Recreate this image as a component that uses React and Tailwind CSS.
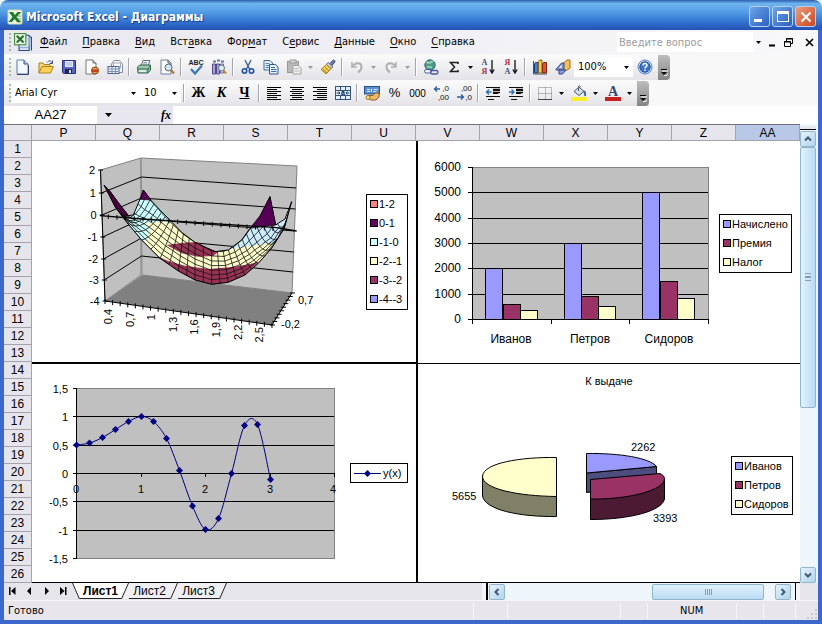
import React from "react";

const COLUMNS = ["P", "Q", "R", "S", "T", "U", "V", "W", "X", "Y", "Z", "AA"];
const ROWS = Array.from({ length: 26 }, (_, i) => i + 1);

/* ---------- small building blocks ---------- */

function Svg({ children, size = 16 }) {
  return (
    <svg viewBox="0 0 16 16" width={size} height={size} fill="none" className="shrink-0 overflow-visible" aria-hidden="true">
      {children}
    </svg>
  );
}

function Tool({ label, children }) {
  return (
    <button type="button" aria-label={label} className="flex h-6 w-[23px] shrink-0 items-center justify-center">
      {children}
    </button>
  );
}

function Caret({ muted }) {
  return (
    <svg viewBox="0 0 5 3" width="5" height="3" className="shrink-0" aria-hidden="true">
      <path d="M0 0h5L2.500 3z" fill={muted ? "#9a9a9a" : "#000"} />
    </svg>
  );
}

function Drop({ label, muted }) {
  return (
    <button type="button" aria-label={label} className="flex h-6 w-[11px] shrink-0 items-center justify-center">
      <Caret muted={muted} />
    </button>
  );
}

function Sep() {
  return <span className="mx-[2px] h-[18px] w-[2px] shrink-0 border-l border-[#a5a5ad] border-r border-r-white" />;
}

function Grip() {
  return (
    <svg viewBox="0 0 7 20" width="7" height="20" className="shrink-0" aria-hidden="true">
      {[2, 6, 10, 14, 18].map((y) => (
        <rect key={y} x="5" y={y - 1} width="2" height="2" fill="#9cc4a4" />
      ))}
    </svg>
  );
}

function Cap() {
  return (
    <button
      type="button"
      aria-label="Параметры панелей инструментов"
      className="ml-[2px] flex h-[25px] w-3 shrink-0 flex-col items-center justify-end rounded-r-sm bg-linear-to-b from-[#bdbdbd] to-[#858585] pb-1"
    >
      <svg viewBox="0 0 7 7" width="7" height="7" aria-hidden="true">
        <path d="M1 2h6M3 6l2 1 2-2" stroke="#fff" fill="none" />
        <path d="M0 .5h6" stroke="#000" />
        <path d="M0 3h6L3 6z" fill="#000" />
      </svg>
    </button>
  );
}

function Combo({ label, value, className }) {
  return (
    <span className={"flex h-5 shrink-0 items-center bg-white " + className}>
      <select
        aria-label={label}
        defaultValue={value}
        className="min-w-0 flex-1 appearance-none bg-transparent pl-1 text-[11px] leading-4 text-black outline-none"
      >
        <option>{value}</option>
      </select>
      <span className="flex w-[13px] items-center justify-center">
        <Caret />
      </span>
    </span>
  );
}

/* ---------- icons ---------- */

const Page = ({ x = 2 }) => (
  <g>
    <path d={`M${x + 1} 1h7l4 4v10h-11z`} fill="#f4f9ff" stroke="#5d7bab" />
    <path d={`M${x + 8} 1v4h4`} fill="#bcd3ef" stroke="#2f4f86" />
    <path d={`M${x + 1} 15.500h11.500V6`} stroke="#2f4270" />
  </g>
);

const IconNew = () => <Svg><Page x={1} /></Svg>;
const IconOpen = () => (
  <Svg>
    <path d="M1 14V4h4l1 1.500h6V8" fill="#f7d774" stroke="#a9801c" />
    <path d="M1 14l3-6.500h11.500L12.500 14z" fill="#ffd257" stroke="#a9801c" />
    <path d="M9 3.500c2-2.500 4-2 5 .5M14.500 1.500v3h-3" stroke="#3c4f74" />
  </Svg>
);
const IconSave = () => (
  <Svg>
    <path d="M1.500 1.500h13v13h-12l-1-1z" fill="#5a64c4" stroke="#27307e" />
    <rect x="4" y="2" width="8" height="6" fill="#e6ecfb" />
    <path d="M5 4h6M5 6h6" stroke="#9fb0da" />
    <rect x="4" y="10" width="7" height="4.500" fill="#20264f" />
    <rect x="8" y="11" width="2" height="3" fill="#dfe4f5" />
  </Svg>
);
const IconPermission = () => (
  <Svg>
    <path d="M2 1h7l3 3v11H2z" fill="#fff" stroke="#777" />
    <path d="M9 1v3h3" stroke="#666" fill="#ddd" />
    <circle cx="11" cy="11.500" r="3.500" fill="#e9a34b" stroke="#8d3a12" />
    <rect x="8" y="10.500" width="6" height="2.500" fill="#c4401c" />
  </Svg>
);
const IconMail = () => (
  <Svg>
    <path d="M4.500 7V5L7 1.500h5.500L15.500 5v8.500H12" fill="#f4f4f6" stroke="#8a8f9c" />
    <path d="M6.500 4h7v5h-7z" fill="#fff" stroke="#a4a9b6" />
    <rect x="1" y="7.500" width="11" height="7" fill="#eef2fb" stroke="#51648f" />
    <path d="M1 10h11M1 12.500h11M5 8v6M8.500 8v6" stroke="#7b8fbd" />
  </Svg>
);
const IconPrint = () => (
  <Svg>
    <path d="M5 7l2-5.500h7L12 7z" fill="#fff" stroke="#5d6d7a" />
    <path d="M7.500 3.500h4M7 5h4" stroke="#8ba0b8" />
    <path d="M1.500 8L4 6h10.500v5L12 14H2z" fill="#9ac9b0" stroke="#35614c" />
    <path d="M2 10h10v3.500" stroke="#35614c" />
    <path d="M3 12h7" stroke="#f2f8f4" strokeWidth="1.500" />
    <path d="M12 10l2.500-3" stroke="#35614c" />
  </Svg>
);
const IconPreview = () => (
  <Svg>
    <path d="M2 1h7l3 3v11H2z" fill="#fff" stroke="#6d7c96" />
    <path d="M9 1v3h3" stroke="#43536f" />
    <circle cx="9.500" cy="8.500" r="3.500" fill="#cfe6f4" stroke="#5a6674" />
    <path d="M12 11l3 3.500" stroke="#b0742a" strokeWidth="2" />
  </Svg>
);
const IconSpell = () => (
  <Svg>
    <text x="8" y="6" textAnchor="middle" fontSize="7" fontFamily="Liberation Sans" fontWeight="700" fill="#222">ABC</text>
    <path d="M3 10l4 4.500L14 6.500" stroke="#3a78b8" strokeWidth="2.200" />
  </Svg>
);
const IconResearch = () => (
  <Svg>
    <path d="M1.500 5h3v10h-3zM5.500 5h3v10h-3z" fill="#a8a3d4" stroke="#514b88" />
    <path d="M2 2.500h3M6 1.500h3M10 2.500h3" stroke="#6b76a8" strokeWidth="2" />
    <path d="M9.500 5h3v9h-3z" fill="#cfd3ea" stroke="#6f6a9c" />
    <circle cx="10.500" cy="9" r="3" fill="#d8eef6" stroke="#6a7480" />
    <path d="M12.500 11.500l2.500 3" stroke="#c18a2a" strokeWidth="2" />
  </Svg>
);
const IconCut = () => (
  <Svg>
    <path d="M5 1l4.500 9M11 1L6.500 10" stroke="#3d5e8e" strokeWidth="1.400" />
    <circle cx="4.500" cy="12" r="2.200" stroke="#1d4fa8" strokeWidth="1.600" />
    <circle cx="11.500" cy="12" r="2.200" stroke="#1d4fa8" strokeWidth="1.600" />
  </Svg>
);
const IconCopy = () => (
  <Svg>
    <path d="M1 1.500h6l2.500 2.500v7H1z" fill="#e6f0fc" stroke="#3f6a9f" />
    <path d="M2.500 4.500h4M2.500 6.500h5M2.500 8.500h5" stroke="#5c87bd" />
    <path d="M6.500 5.500h6L15 8v7H6.500z" fill="#e6f0fc" stroke="#2d588f" />
    <path d="M8 8.500h4M8 10.500h5.500M8 12.500h5.500" stroke="#3f6fae" />
  </Svg>
);
const IconPaste = () => (
  <Svg>
    <rect x="1.500" y="2.500" width="11" height="11" fill="#b9b9b9" stroke="#9a9a9a" />
    <rect x="4" y="1" width="6" height="3" fill="#d5d5d5" stroke="#999" />
    <path d="M7 6.500h5L15 9v6H7z" fill="#f1f1f1" stroke="#a3a3a3" />
    <path d="M8.500 9.500h4M8.500 12h5" stroke="#b3b3b3" />
  </Svg>
);
const IconBrush = () => (
  <Svg>
    <path d="M10 4.500L13.500 .8l1.700 1.600L12 6.500z" fill="#6d7fae" stroke="#3d4a78" />
    <path d="M8 3.500l5 4.500-2 1.500-4.500-4z" fill="#d7dcec" stroke="#59648e" />
    <path d="M6.500 5.500L11 9.500 6 15 1 10.500z" fill="#f3cf55" stroke="#a27a1b" />
    <path d="M3 10.500l4 3.500M5 8.500l4 3.500" stroke="#a27a1b" />
  </Svg>
);
const IconUndo = ({ flip }) => (
  <Svg>
    <g transform={flip ? "translate(16 0) scale(-1 1)" : undefined}>
      <path d="M3 3v5h5" stroke="#b0b0b0" strokeWidth="1.600" />
      <path d="M3.500 7.500C6 3 12.500 3 12.500 8c0 3-2 4.500-3.500 5.500" stroke="#b0b0b0" strokeWidth="2" />
    </g>
  </Svg>
);
const IconLink = () => (
  <Svg>
    <circle cx="7" cy="6" r="5.200" fill="#4f9a86" stroke="#2e6a78" />
    <path d="M3 4c2-2 3 1 4 0s2-2 3-1M4 8c2-1 3 1 5 0" stroke="#a5dcc0" strokeWidth="1.500" />
    <rect x="1.500" y="10.500" width="7" height="3.500" rx="1.700" fill="#fff" fillOpacity=".6" stroke="#4a5aa0" />
    <rect x="7.500" y="11.500" width="7.500" height="3.500" rx="1.700" stroke="#4a5aa0" strokeWidth="1.300" />
  </Svg>
);
const IconSum = () => (
  <Svg>
    <path d="M12 5V3.500H4.500L8.500 8l-4 4.500H12V11" stroke="#1c1c1c" strokeWidth="1.500" />
  </Svg>
);
const IconSort = ({ desc }) => (
  <Svg>
    <text x="4.500" y="6" textAnchor="middle" fontSize="8" fontFamily="Liberation Serif" fontWeight="700" fill={desc ? "#a83242" : "#3c4a80"}>{desc ? "Я" : "А"}</text>
    <text x="4.500" y="15" textAnchor="middle" fontSize="8" fontFamily="Liberation Serif" fontWeight="700" fill={desc ? "#3c4a80" : "#a83242"}>{desc ? "А" : "Я"}</text>
    <path d="M12 1v12M9.800 10.500L12 14l2.200-3.500" stroke="#111" strokeWidth="1.300" />
  </Svg>
);
const IconChart = () => (
  <Svg>
    <path d="M1.500 2v13H15" stroke="#44516c" />
    <path d="M2.500 5l1-1.500H6V14H2.500z" fill="#4d7fd0" stroke="#24417f" />
    <path d="M6.500 2.500l1-1.500H10v13H6.500z" fill="#f3cc4c" stroke="#8a6914" />
    <path d="M10.500 5l1-1.500H14.500V14h-4z" fill="#d8552f" stroke="#7f2711" />
  </Svg>
);
const IconDraw = () => (
  <Svg>
    <path d="M7 5.500L12 1h3v8l-3.500 2.500H8z" fill="#f4c254" stroke="#9b6e1c" />
    <path d="M1 10.500L6.500 4H9v7H1z" fill="#7f93cf" stroke="#35468a" />
    <path d="M4 8.500l2.500-2.500v3z" fill="#fff" />
    <path d="M4 11h7l-3.500 4H4z" fill="#8a9ad8" stroke="#35468a" />
  </Svg>
);
const IconHelp = () => (
  <Svg>
    <circle cx="8" cy="8" r="7" fill="#c5dcf5" stroke="#5b86c0" />
    <circle cx="8" cy="8" r="5.200" fill="#3a72c4" stroke="#24569f" />
    <path d="M6 6.500c0-3 4.200-2.500 4 0C9.900 7.800 8 7.700 8 9.500M8 10.500v1.500" stroke="#fff" strokeWidth="1.500" />
  </Svg>
);
const IconAlign = ({ kind }) => (
  <Svg>
    {[1, 3, 5, 7, 9, 11, 13].map((y, i) => {
      const w = i % 2 ? 10 : 14;
      const x = kind === "left" ? 1 : kind === "right" ? 15 - w : 8 - w / 2;
      return <rect key={y} x={x} y={y + 1} width={w} height="1" fill="#000" />;
    })}
  </Svg>
);
const IconMerge = () => (
  <Svg>
    <rect x=".5" y="1.500" width="15" height="13" fill="#e4effa" stroke="#34547e" />
    <path d="M.5 5.500h15M.5 10.500h15M5.500 2v3.500M10.500 2v3.500M5.500 10.500v4M10.500 10.500v4" stroke="#34547e" />
    <path d="M1.500 8h3M3.500 6.500L5 8 3.500 9.500M14.500 8h-3M12.500 6.500L11 8l1.500 1.500" stroke="#1d3c66" />
    <text x="8" y="10.200" textAnchor="middle" fontSize="7" fontWeight="700" fontFamily="Liberation Sans" fill="#111">a</text>
  </Svg>
);
const IconMoney = () => (
  <Svg>
    <rect x=".5" y="1.500" width="15" height="7.500" fill="#5d8fd0" stroke="#24508e" />
    <path d="M3 4.500h3M3 6.500h3M7.500 4v3M9.500 4.500h4M9.500 6.500h3" stroke="#dceaff" />
    <path d="M4 10.500h5l2-2.500h4v4l-3 3H7l-3-2z" fill="#f0b768" stroke="#935c1e" />
    <circle cx="4" cy="12.500" r="2" fill="#ffe27a" stroke="#9a7419" />
  </Svg>
);
const IconDecimal = ({ dec }) => (
  <Svg>
    <path d={dec ? "M1 12h6M5 9.500L7.500 12 5 14.500" : "M7 4H1.500M4 1.500L1.500 4 4 6.500"} stroke="#2c5f9e" strokeWidth="1.300" />
    <text x="16" y="6" textAnchor="end" fontSize="8" fontFamily="Liberation Sans" fill="#111">{dec ? ",00" : ",0"}</text>
    <text x="16" y="15" textAnchor="end" fontSize="8" fontFamily="Liberation Sans" fill="#111">{dec ? ",0" : ",00"}</text>
  </Svg>
);
const IconIndent = ({ inc }) => (
  <Svg>
    <path d="M1 2.500h14M8 5.500h7M8 8.500h5M1 11.500h14M3 14.500h6" stroke="#111" strokeWidth="1" />
    <path d="M8 4.500h7M8 7.500h7" stroke="#111" strokeWidth="1.500" />
    <path d={inc ? "M1 7h5M3.500 4.500L6 7 3.500 9.500" : "M6.500 7h-5M4 4.500L1.500 7 4 9.500"} stroke="#2c6fae" strokeWidth="1.300" />
  </Svg>
);
const IconBorders = () => (
  <Svg>
    <path d="M1.500 2.500h13v12h-13zM8.500 2.500v12M1.500 8.500h13" stroke="#7c7c84" strokeDasharray="1 1" />
    <path d="M1 14.500h14" stroke="#444" />
  </Svg>
);
const IconFill = () => (
  <Svg>
    <path d="M3 6.500L8 2l5 4.500-5 4z" fill="#d4dce8" stroke="#4b596e" />
    <path d="M7.500 6V1.500c0-1 2-1 2 0" stroke="#4b596e" />
    <path d="M12.500 6c2 1 2 3 1.500 5" stroke="#2f62a8" strokeWidth="1.800" />
    <rect x="0" y="12" width="16" height="4" fill="#f8ee2c" />
  </Svg>
);
const IconFontColor = () => (
  <Svg>
    <text x="8" y="10.500" textAnchor="middle" fontSize="14" fontFamily="Liberation Serif" fontWeight="700" fill="#34466f">A</text>
    <rect x="0" y="12" width="16" height="4" fill="#c8201c" />
  </Svg>
);
const IconExcel = () => (
  <Svg>
    <rect x="1" y="1" width="14" height="14" rx="1" fill="#f3f8e8" stroke="#c9d8a8" />
    <path d="M10 4h4M10 7h4M10 10h4M10 13h4" stroke="#79ad70" />
    <path d="M2 3h4l2 3 2.500-3H14L9.500 8l4.500 5h-4L7.500 10 5 13H1.500l4-5z" fill="#1f7a2c" />
  </Svg>
);
const IconBook = () => (
  <Svg size={18}>
    <path d="M4.500 4.500h9v11h-9z" fill="#dbe7f7" stroke="#2c4a7d" />
    <path d="M9 2h4l2.500 2v11.500" fill="#c9dcf3" stroke="#2c4a7d" />
    <path d="M13.500 3v11" stroke="#6d8fc0" />
    <rect x=".5" y=".5" width="10" height="10" fill="#eaf5e3" stroke="#4b8a45" />
    <path d="M2.500 2.500l6 6M8.500 2.500l-6 6" stroke="#1f6f2c" strokeWidth="1.800" />
    <path d="M5 13h8" stroke="#8ba7cf" />
  </Svg>
);

/* ---------- window chrome ---------- */

function TitleBar() {
  const box = "flex h-[21px] w-[21px] items-center justify-center rounded-[3px] border border-[#b5d2f5] ";
  return (
    <header className="flex h-[30px] shrink-0 items-center rounded-t-lg bg-[linear-gradient(#2c5fb0_0,#6fb4ee_12%,#57a2e8_35%,#3577d2_70%,#2450b4_100%)] pl-[7px] pr-[6px] pt-[3px]">
      <IconExcel />
      <h1 className="ml-[3px] flex-1 truncate text-xs font-bold text-white [text-shadow:1px_1px_1px_#173b80]">
        Microsoft Excel - Диаграммы
      </h1>
      <div className="flex gap-[2px]">
        <button type="button" aria-label="Свернуть" className={box + "bg-linear-to-br from-[#6ea5e6] to-[#2b5fc0]"}>
          <span className="mt-2 mr-1 h-[3px] w-2 bg-white" />
        </button>
        <button type="button" aria-label="Развернуть" className={box + "bg-linear-to-br from-[#6ea5e6] to-[#2b5fc0]"}>
          <span className="h-[11px] w-3 border border-t-[3px] border-white" />
        </button>
        <button type="button" aria-label="Закрыть" className={box + "bg-linear-to-br from-[#ee9a78] to-[#cb4421]"}>
          <svg viewBox="0 0 12 12" width="12" height="12" aria-hidden="true">
            <path d="M1.500 1.500l9 9M10.500 1.500l-9 9" stroke="#fff" strokeWidth="2" />
          </svg>
        </button>
      </div>
    </header>
  );
}

const MENU = [
  ["", "Ф", "айл"],
  ["", "П", "равка"],
  ["", "В", "ид"],
  ["Вст", "а", "вка"],
  ["Фор", "м", "ат"],
  ["С", "е", "рвис"],
  ["", "Д", "анные"],
  ["", "О", "кно"],
  ["", "С", "правка"],
];

function MenuBar() {
  return (
    <div className="flex h-6 shrink-0 items-center bg-linear-to-r from-[#e9e7ef] to-[#f8f8f9] text-[11px]">
      <Grip />
      <span className="ml-[3px]">
        <IconBook />
      </span>
      <nav className="ml-2 flex flex-1 gap-[15px]">
        {MENU.map(([a, u, b]) => (
          <button type="button" key={a + u + b}>
            {a}
            <span className="underline underline-offset-2">{u}</span>
            {b}
          </button>
        ))}
      </nav>
      <input
        aria-label="Введите вопрос"
        placeholder="Введите вопрос"
        className="h-5 w-[136px] bg-white pl-[2px] outline-none placeholder:text-[#9c9c9c]"
      />
      <Drop label="Список вопросов" />
      <div className="ml-1 flex items-center gap-2 pr-1">
        <button type="button" aria-label="Свернуть книгу">
          <svg viewBox="0 0 8 9" width="8" height="9"><path d="M1 7.500h6" stroke="#000" strokeWidth="2" /></svg>
        </button>
        <button type="button" aria-label="Восстановить книгу">
          <svg viewBox="0 0 9 9" width="9" height="9" fill="none" stroke="#000">
            <path d="M2.500 3V.5h6v5H6.500M2.500 1h6" />
            <path d="M.5 3.500h6v5h-6zM.5 4h6" />
          </svg>
        </button>
        <button type="button" aria-label="Закрыть книгу" className="ml-1">
          <svg viewBox="0 0 9 9" width="9" height="9"><path d="M1 1l7 7M8 1L1 8" stroke="#000" strokeWidth="1.600" /></svg>
        </button>
      </div>
    </div>
  );
}

function StandardBar() {
  return (
    <div className="flex h-[26px] shrink-0 items-center bg-[#f8f8f9]">
      <div className="flex h-[25px] items-center bg-linear-to-b from-[#fbfbfb] to-[#e3e3e8]">
        <Grip />
        <Tool label="Создать"><IconNew /></Tool>
        <Tool label="Открыть"><IconOpen /></Tool>
        <Tool label="Сохранить"><IconSave /></Tool>
        <Tool label="Разрешения"><IconPermission /></Tool>
        <Tool label="Сообщение"><IconMail /></Tool>
        <Sep />
        <Tool label="Печать"><IconPrint /></Tool>
        <Tool label="Предварительный просмотр"><IconPreview /></Tool>
        <Sep />
        <Tool label="Орфография"><IconSpell /></Tool>
        <Tool label="Справочные материалы"><IconResearch /></Tool>
        <Sep />
        <Tool label="Вырезать"><IconCut /></Tool>
        <Tool label="Копировать"><IconCopy /></Tool>
        <Tool label="Вставить"><IconPaste /></Tool>
        <Drop label="Варианты вставки" muted />
        <Tool label="Формат по образцу"><IconBrush /></Tool>
        <Sep />
        <Tool label="Отменить"><IconUndo /></Tool>
        <Drop label="Список отмены" muted />
        <Tool label="Вернуть"><IconUndo flip /></Tool>
        <Drop label="Список возврата" muted />
        <Sep />
        <Tool label="Гиперссылка"><IconLink /></Tool>
        <Tool label="Автосумма"><IconSum /></Tool>
        <Drop label="Функции" />
        <Tool label="Сортировка по возрастанию"><IconSort /></Tool>
        <Tool label="Сортировка по убыванию"><IconSort desc /></Tool>
        <Sep />
        <Tool label="Мастер диаграмм"><IconChart /></Tool>
        <Tool label="Рисование"><IconDraw /></Tool>
        <Combo label="Масштаб" value="100%" className="w-[59px]" />
        <Tool label="Справка"><IconHelp /></Tool>
        <Cap />
      </div>
    </div>
  );
}

function FormatBar() {
  const letter = "font-['Liberation_Serif',serif] text-sm leading-4 font-bold";
  return (
    <div className="flex h-[26px] shrink-0 items-center bg-[#f8f8f9]">
      <div className="flex h-[25px] items-center bg-linear-to-b from-[#fbfbfb] to-[#e3e3e8]">
        <Grip />
        <Combo label="Шрифт" value="Arial Cyr" className="w-[129px]" />
        <Combo label="Размер" value="10" className="w-[41px]" />
        <Sep />
        <Tool label="Полужирный"><span className={letter}>Ж</span></Tool>
        <Tool label="Курсив"><span className={letter + " italic"}>К</span></Tool>
        <Tool label="Подчеркнутый"><span className={letter + " underline"}>Ч</span></Tool>
        <Sep />
        <Tool label="По левому краю"><IconAlign kind="left" /></Tool>
        <Tool label="По центру"><IconAlign kind="center" /></Tool>
        <Tool label="По правому краю"><IconAlign kind="right" /></Tool>
        <Tool label="Объединить"><IconMerge /></Tool>
        <Sep />
        <Tool label="Денежный формат"><IconMoney /></Tool>
        <Tool label="Процентный формат"><span className="font-['Liberation_Sans',sans-serif] text-[13px]">%</span></Tool>
        <Tool label="Формат с разделителями"><span className="font-['Liberation_Sans',sans-serif] text-[10px]">000</span></Tool>
        <Tool label="Увеличить разрядность"><IconDecimal /></Tool>
        <Tool label="Уменьшить разрядность"><IconDecimal dec /></Tool>
        <Sep />
        <Tool label="Уменьшить отступ"><IconIndent /></Tool>
        <Tool label="Увеличить отступ"><IconIndent inc /></Tool>
        <Sep />
        <Tool label="Границы"><IconBorders /></Tool>
        <Drop label="Виды границ" />
        <Tool label="Цвет заливки"><IconFill /></Tool>
        <Drop label="Цвета заливки" />
        <Tool label="Цвет шрифта"><IconFontColor /></Tool>
        <Drop label="Цвета шрифта" />
        <Cap />
      </div>
    </div>
  );
}

function FormulaBar() {
  return (
    <div className="flex h-[18px] shrink-0 bg-[#e8e7f0]">
      <input
        aria-label="Имя"
        defaultValue="AA27"
        className="w-[93px] bg-white text-center font-['Liberation_Sans',sans-serif] text-[13px] outline-none"
      />
      <div className="flex w-[76px] items-center justify-between pl-2 pr-[2px]">
        <button type="button" aria-label="Список имен">
          <svg viewBox="0 0 7 4" width="7" height="4"><path d="M0 0h7L3.500 4z" /></svg>
        </button>
        <button type="button" aria-label="Вставка функции" className="font-['Liberation_Serif',serif] text-xs leading-4 font-bold italic">
          fx
        </button>
      </div>
      <input aria-label="Строка формул" className="min-w-0 flex-1 bg-white outline-none" />
    </div>
  );
}

/* ---------- charts ---------- */

const CHART_TEXT = "font-['Liberation_Sans',sans-serif]";

function Legend({ items, className }) {
  return (
    <ul className={"shrink-0 border border-black bg-white text-[11px] leading-[19px] " + CHART_TEXT + " " + className}>
      {items.map(([name, color]) => (
        <li key={name} className="flex items-center gap-px pl-[3px] whitespace-nowrap">
          <span className="size-2 border border-black" style={{ backgroundColor: color }} />
          {name}
        </li>
      ))}
    </ul>
  );
}

const FRONT = [[57, 120], [90, 185], [125, 232], [170, 285], [225, 340], [280, 378], [330, 405], [380, 418], [430, 412], [480, 390], [520, 355], [560, 310], [598, 250], [620, 170]];
const BACK = [[175, 135], [195, 165], [218, 190], [240, 215], [265, 240], [295, 268], [330, 292], [380, 318], [415, 320], [445, 306], [472, 284], [497, 250], [525, 212], [555, 155]];
const OUTLINE =
  "M57 120L90 185L125 232L170 285L225 340L280 378L330 405L380 418L430 412L480 390L520 355L560 310L598 250L620 170L600 222L572 240L555 155L520 225L495 250L470 285L430 315L390 320L330 292L290 262L240 210L197 165L175 135L165 163L145 210L130 212L75 140z";
const T_STEPS = [0, 0.14, 0.28, 0.42, 0.56, 0.7, 0.85, 1];
const poly = (pts) => pts.map((p) => p.join(",")).join(" ");

/* Point of the sheet: s runs along the front edge, t from front to back; both ends sag in the middle. */
function sheetPoint(s, t) {
  const i = Math.min(Math.floor(s), FRONT.length - 2);
  const k = s - i;
  const along = (edge, axis) => edge[i][axis] + (edge[i + 1][axis] - edge[i][axis]) * k;
  const side = Math.abs((2 * s) / (FRONT.length - 1) - 1);
  const sag = 85 * side * side * side * 4 * t * (1 - t);
  return [0, 1].map((axis) => along(FRONT, axis) * (1 - t) + along(BACK, axis) * t + (axis ? sag : 0));
}

function meshLines() {
  const last = FRONT.length - 1;
  const steps = Array.from({ length: last * 2 + 1 }, (_, i) => i / 2);
  return [
    ...T_STEPS.map((t) => steps.map((s) => sheetPoint(s, t))),
    ...steps.map((s) => T_STEPS.map((t) => sheetPoint(s, t))),
  ];
}

function SurfaceChart() {
  const left = [170, 193, 215, 237, 259, 280, 301];
  const back = [158, 177, 198, 219, 238, 256, 275];
  const right = [166, 188, 209, 231, 252, 272, 293];
  const leftX = (i) => 100.5 + i * 0.75;
  const xLabels = ["0,4", "0,7", "1", "1,3", "1,6", "1,9", "2,2", "2,5"];
  return (
    <svg viewBox="32 141 334 221" className={"min-w-0 flex-1 text-[11px] " + CHART_TEXT} role="img" aria-label="Поверхность">
      <path d="M100.500 170L141 158V275L105 301z" fill="#c0c0c0" stroke="#808080" />
      <path d="M141 158L297 166L292 293L142 275z" fill="#c0c0c0" stroke="#808080" />
      <path d="M105 301L142 275L292 293L272 325z" fill="#808080" />
      {left.slice(1, 6).map((y, k) => (
        <path key={y} d={`M${leftX(k + 1)} ${y}L141.500 ${back[k + 1]}L${297 - (k + 1) * 0.8} ${right[k + 1]}`} fill="none" stroke="#000" />
      ))}
      <clipPath id="sheet">
        <path d={OUTLINE} />
      </clipPath>
      <g transform="translate(85 145) scale(.3333)" strokeLinejoin="round">
        <path d={OUTLINE} fill="#ffffcc" />
        <path d="M165 163L197 165L225 190L245 212L262 236L240 230L175 235L195 245L185 290L170 285L125 232L115 215L145 210z" fill="#ccffff" />
        <path d="M430 315L470 285L500 250L575 240L600 222L620 170L598 250L570 292L530 298L450 310z" fill="#ccecff" />
        <path d="M245 300L290 294L335 291L365 308L400 320L385 333L340 335L290 325z" fill="#993355" />
        <path d="M215 332L250 348L300 362L370 372L450 365L520 352L480 390L430 412L380 418L330 405L280 378z" fill="#993355" />
        <path d="M57 120L78 140L100 172L132 212L115 218L90 185z" fill="#4a0040" />
        <g clipPath="url(#sheet)" fill="none" stroke="#111" strokeWidth="2.400">
          {meshLines().map((pts, i) => (
            <polyline key={i} points={poly(pts)} />
          ))}
        </g>
        <path d={OUTLINE} fill="none" stroke="#000" strokeWidth="3" />
        <path d="M175 135L198 165L165 163z" fill="#550055" stroke="#000" strokeWidth="2" />
        <path d="M555 155L572 240L495 250L525 212z" fill="#550055" stroke="#000" strokeWidth="2" />
        <path d="M45 212L170 222L575 248L635 258" fill="none" stroke="#000" strokeWidth="4" />
        <path d={Array.from({ length: 20 }, (_, i) => `M${70 + i * 26} ${208 + i * 1.9}v14`).join("")} stroke="#000" strokeWidth="3" />
      </g>
      <path d="M100.500 170L105 301L272 325L292 293" fill="none" stroke="#000" />
      <path
        d={
          left.map((y, i) => `M${leftX(i) - 2.500} ${y}h5`).join("") +
          Array.from({ length: 23 }, (_, i) => `M${105 + i * 7.590} ${299 + i * 1.090}v5`).join("") +
          Array.from({ length: 10 }, (_, i) => `M${270 + i * 2.220} ${325 - i * 3.560}h5`).join("")
        }
        stroke="#000"
      />
      {[2, 1, 0, -1, -2, -3, -4].map((v, i) => (
        <text key={v} x={95 + i * 0.750} y={left[i] + 4} textAnchor="end">{v}</text>
      ))}
      {xLabels.map((v, i) => (
        <text key={v} textAnchor="end" transform={`translate(${112 + i * 21.600} ${309 + i * 2.600}) rotate(-90)`}>{v}</text>
      ))}
      <text x="298" y="304">0,7</text>
      <text x="281" y="328">-0,2</text>
    </svg>
  );
}

const BARS = [
  [485, 268, "#9999ff"], [503, 304, "#993366"], [520, 310, "#ffffcc"],
  [564, 243, "#9999ff"], [581, 296, "#993366"], [598, 306, "#ffffcc"],
  [642, 192, "#9999ff"], [660, 281, "#993366"], [677, 298, "#ffffcc"],
];

function BarChart() {
  const ys = [319, 294, 268, 243, 218, 192, 167];
  return (
    <svg viewBox="418 141 301 222" className={"min-w-0 flex-1 text-xs " + CHART_TEXT} role="img" aria-label="Начисления по сотрудникам">
      <rect x="472.500" y="167.500" width="236" height="152" fill="#c0c0c0" stroke="#808080" />
      {ys.map((y, i) => (
        <g key={y}>
          <path d={i === 6 ? `M468 ${y + 0.5}h5` : `M468 ${y + 0.5}h240`} stroke="#000" />
          <text x="461" y={y + 4} textAnchor="end">{i * 1000}</text>
        </g>
      ))}
      {BARS.map(([x, y, fill]) => (
        <rect key={x} x={x + 0.5} y={y + 0.5} width="17" height={319 - y} fill={fill} stroke="#000" />
      ))}
      <path d="M472.500 167V324M551.500 319v5M629.500 319v5M708.500 319v5" stroke="#000" />
      <text x="511" y="343" textAnchor="middle">Иванов</text>
      <text x="590" y="343" textAnchor="middle">Петров</text>
      <text x="669" y="343" textAnchor="middle">Сидоров</text>
    </svg>
  );
}

const CURVE = [
  [76.5, 445], [89.5, 443], [102.5, 437.5], [115.5, 429.5], [128.5, 421.5], [141.5, 416.5], [153.5, 421.5], [166.5, 438.5],
  [179.5, 470.5], [192.5, 506], [205.5, 529.5], [218.5, 518.5], [231.5, 473.5], [244.5, 425.5], [257.5, 424.5], [270.5, 479.5],
];

function smooth(pts) {
  let d = `M${pts[0][0]} ${pts[0][1]}`;
  for (let i = 0; i < pts.length - 1; i++) {
    const p0 = pts[i - 1] || pts[i];
    const p1 = pts[i];
    const p2 = pts[i + 1];
    const p3 = pts[i + 2] || p2;
    d += `C${p1[0] + (p2[0] - p0[0]) / 6} ${p1[1] + (p2[1] - p0[1]) / 6} ${p2[0] - (p3[0] - p1[0]) / 6} ${p2[1] - (p3[1] - p1[1]) / 6} ${p2[0]} ${p2[1]}`;
  }
  return d;
}

function LineChart() {
  const labels = ["1,5", "1", "0,5", "0", "-0,5", "-1", "-1,5"];
  const ys = [388.5, 416.5, 445.5, 473.5, 501.5, 530.5, 558.5];
  return (
    <svg viewBox="32 364 318 218" className={"min-w-0 flex-1 text-[11px] " + CHART_TEXT} role="img" aria-label="График y(x)">
      <rect x="76.500" y="388.500" width="258" height="170" fill="#c0c0c0" stroke="#808080" />
      {ys.map((y, i) => (
        <g key={y}>
          <path d={i === 0 || i === 6 ? `M73 ${y}h4` : `M73 ${y}h261`} stroke="#000" />
          <text x="68" y={y + 4} textAnchor="end">{labels[i]}</text>
        </g>
      ))}
      <path d="M76.500 388V559M141.500 473v4M205.500 473v4M270.500 473v4M334.500 473v4" stroke="#000" />
      {[76, 141, 205, 270, 333].map((x, i) => (
        <text key={x} x={x} y="493" textAnchor="middle">{i}</text>
      ))}
      <path d={smooth(CURVE)} fill="none" stroke="#000080" />
      {CURVE.map(([x, y]) => (
        <path key={x} d={`M${x} ${y - 3.500}l3.500 3.500-3.500 3.500-3.500-3.500z`} fill="#000080" />
      ))}
    </svg>
  );
}

function PieChart() {
  return (
    <svg viewBox="418 388 313 194" className={"min-w-0 flex-1 text-[11px] " + CHART_TEXT} role="img" aria-label="К выдаче">
      <g stroke="#000" strokeLinejoin="round">
        <path d="M482.500 477V496C485 510 520 517 556.500 516.500V496.500z" fill="#808066" />
        <path d="M556.500 457.500V496.500C518 496 482 489 482.500 476C484 463 520 457 556.500 457.500z" fill="#ffffcc" />
        <path d="M586.500 473V492.500L656.500 485V466.500z" fill="#4d4d80" />
        <path d="M586.500 453.500V473L656.500 466.500C650 458 620 453 586.500 453.500z" fill="#9999ff" />
        <path d="M590.500 499V519.500C630 519.500 662 511 664.500 499V480z" fill="#4d1a33" />
        <path d="M590.500 479.500V499C630 499.500 664 490 664.500 479C664.500 476 662 474.500 660 473.500z" fill="#993366" />
      </g>
      <text x="631" y="451">2262</text>
      <text x="653" y="522">3393</text>
      <text x="452" y="500">5655</text>
    </svg>
  );
}

function Charts() {
  return (
    <div className="grid min-w-0 flex-1 grid-cols-[386fr_382fr] grid-rows-[223fr_219fr] bg-white">
      <section className="flex min-w-0 items-center border-r-2 border-b-2 border-black">
        <SurfaceChart />
        <Legend
          className="mr-2 w-[42px]"
          items={[["1-2", "#ff8080"], ["0-1", "#660066"], ["-1-0", "#ccffff"], ["-2--1", "#ffffcc"], ["-3--2", "#993366"], ["-4--3", "#9999ff"]]}
        />
      </section>
      <section className="flex min-w-0 items-center border-b border-black">
        <BarChart />
        <Legend className="mr-2 mb-[18px] w-[73px]" items={[["Начислено", "#9999ff"], ["Премия", "#993366"], ["Налог", "#ffffcc"]]} />
      </section>
      <section className="flex min-w-0 items-center border-r-2 border-b border-black">
        <LineChart />
        <div className={"mr-2 flex w-[58px] shrink-0 items-center gap-[2px] border border-black bg-white pl-[3px] text-[11px] leading-[18px] " + CHART_TEXT}>
          <svg viewBox="0 0 27 8" width="27" height="8" aria-hidden="true">
            <path d="M0 4.500h27" stroke="#000080" />
            <path d="M13.500 1l3.500 3.500L13.500 8 10 4.500z" fill="#000080" />
          </svg>
          y(x)
        </div>
      </section>
      <section className="flex min-w-0 flex-col border-b border-black">
        <h2 className={"pt-[10px] text-center text-[11px] leading-[14px] " + CHART_TEXT}>К выдаче</h2>
        <div className="flex flex-1 items-center">
          <PieChart />
          <Legend className="mr-[7px] w-[62px]" items={[["Иванов", "#9999ff"], ["Петров", "#993366"], ["Сидоров", "#ffffcc"]]} />
        </div>
      </section>
    </div>
  );
}

/* ---------- sheet ---------- */

function ScrollButton({ label, d }) {
  return (
    <button
      type="button"
      aria-label={label}
      className="flex size-4 shrink-0 items-center justify-center rounded-xs border border-[#8fb6cc] bg-linear-to-br from-[#e6f3fc] to-[#b3d3ea]"
    >
      <svg viewBox="0 0 8 8" width="8" height="8" fill="none" aria-hidden="true">
        <path d={d} stroke="#3f5a78" strokeWidth="2" />
      </svg>
    </button>
  );
}

function VerticalScroll() {
  return (
    <div className="flex w-[18px] shrink-0 flex-col items-center bg-[#eef6fb] pr-[2px]">
      <span className="mt-[2px] mb-[1px] h-1 w-full border-b border-black bg-[#e8e7f0]" />
      <ScrollButton label="Вверх" d="M1 5.500l3-3 3 3" />
      <div className="flex w-4 flex-1 flex-col">
        <div className="flex flex-[260] items-center justify-center rounded-xs border border-[#8fb6cc] bg-linear-to-r from-[#e2f2fd] to-[#b9dbf3]">
          <span className="h-2 w-[6px] border-y border-[#7f9fb6]">
            <span className="mt-[2px] block h-[2px] border-y border-[#7f9fb6]" />
          </span>
        </div>
        <div className="flex-[160]" />
      </div>
      <ScrollButton label="Вниз" d="M1 2.500l3 3 3-3" />
    </div>
  );
}

function Sheet() {
  return (
    <main className="flex flex-1 bg-white">
      <div className={"flex min-w-0 flex-1 flex-col text-xs " + CHART_TEXT}>
        <div className="flex h-[17px] shrink-0 border-t border-[#6f6f78] bg-[#e6e5ec]">
          <span className="w-7 shrink-0 border-r border-b border-[#a3a2ad]" />
          {COLUMNS.map((c) => (
            <span
              key={c}
              className={
                "min-w-0 flex-1 border-r border-b border-[#a3a2ad] text-center leading-4 " + (c === "AA" ? "bg-[#b9c8e6]" : "")
              }
            >
              {c}
            </span>
          ))}
        </div>
        <div className="flex flex-1">
          <div className="flex w-7 shrink-0 flex-col bg-[#e6e5ec]">
            {ROWS.map((r) => (
              <span key={r} className="h-[17px] border-r border-b border-[#a3a2ad] text-center leading-[17px]">
                {r}
              </span>
            ))}
          </div>
          <Charts />
        </div>
      </div>
      <VerticalScroll />
    </main>
  );
}

function NavButton({ label, d }) {
  return (
    <button type="button" aria-label={label} className="flex h-4 w-[17px] items-center justify-center">
      <svg viewBox="0 0 7 8" width="7" height="8" aria-hidden="true">
        <path d={d} />
      </svg>
    </button>
  );
}

function TabEdge({ falling, fillLeft, fillRight }) {
  return (
    <svg viewBox="0 0 8 16" width="8" height="16" className="shrink-0" aria-hidden="true">
      <path d={falling ? "M0 0L8 16H0z" : "M0 0H8L0 16z"} fill={fillLeft} />
      <path d={falling ? "M0 0H8V16z" : "M8 0V16H0z"} fill={fillRight} />
      <path d={falling ? "M.5 0L7.500 16" : "M7.500 0L.5 16"} stroke="#222" />
    </svg>
  );
}

function Tab({ children, active }) {
  return (
    <button
      type="button"
      className={"h-4 w-[41px] border-b border-[#222] text-center leading-4 " + (active ? "bg-white font-bold" : "bg-[#f0eff4]")}
    >
      {children}
    </button>
  );
}

function TabBar() {
  return (
    <div className={"flex h-[17px] shrink-0 bg-[#e6e5ec] text-xs leading-4 " + CHART_TEXT}>
      <div className="flex">
        <NavButton label="Первый лист" d="M0 0h1.500v8H0zM6.500 0v8L2 4z" />
        <NavButton label="Предыдущий лист" d="M5 0v8L1 4z" />
        <NavButton label="Следующий лист" d="M2 0v8l4-4z" />
        <NavButton label="Последний лист" d="M5 0h1.500v8H5zM0 0v8l4.500-4z" />
      </div>
      <div className="flex flex-1">
        <TabEdge falling fillLeft="#e6e5ec" fillRight="#fff" />
        <Tab active>Лист1</Tab>
        <TabEdge fillLeft="#fff" fillRight="#f0eff4" />
        <Tab>Лист2</Tab>
        <TabEdge fillLeft="#f0eff4" fillRight="#f0eff4" />
        <Tab>Лист3</Tab>
        <TabEdge fillLeft="#f0eff4" fillRight="#e6e5ec" />
      </div>
      <div className="flex w-[318px] items-center border-x-4 border-[#f4f4f6] bg-[#eef6fb]">
        <span className="mr-px h-full w-[2px] bg-black" />
        <ScrollButton label="Влево" d="M5.500 1l-3 3 3 3" />
        <div className="ml-[147px] flex h-4 flex-1 items-center justify-center gap-[1px] rounded-xs border border-[#8fb6cc] bg-linear-to-b from-[#e2f2fd] to-[#b9dbf3]">
          {[0, 1, 2, 3].map((n) => (
            <span key={n} className="h-[6px] w-px bg-[#7f9fb6]" />
          ))}
        </div>
        <span className="w-[11px]" />
        <ScrollButton label="Вправо" d="M2.500 1l3 3-3 3" />
        <span className="ml-1 h-full w-px bg-black" />
      </div>
      <span className="w-[18px] shrink-0" />
    </div>
  );
}

function StatusBar() {
  const cell = "h-4 border-l border-[#f7f6fa] ";
  return (
    <footer className="flex h-5 shrink-0 items-center border-t border-[#f6f6f8] bg-[#e8e6ec] text-[11px] leading-4">
      <span className="flex-1 pl-1">Готово</span>
      <span className={cell + "w-[34px]"} />
      <span className={cell + "w-[113px]"} />
      <span className={cell + "w-[27px]"} />
      <span className={cell + "w-[89px] pl-8"}>NUM</span>
      <span className={cell + "w-[27px]"} />
      <span className={cell + "w-8"} />
      <span className={cell + "w-[11px]"} />
      <svg viewBox="0 0 12 12" width="12" height="12" className="self-end" aria-hidden="true">
        <path d="M9 1h2v2H9zM5 5h2v2H5zM9 5h2v2H9zM1 9h2v2H1zM5 9h2v2H5zM9 9h2v2H9z" fill="#c9c7d0" />
      </svg>
    </footer>
  );
}

export default function App() {
  return (
    <div className="flex min-h-screen flex-col bg-[#eef4fb] font-['DejaVu_Sans_Condensed','DejaVu_Sans',sans-serif] text-black">
      <TitleBar />
      <div className="flex flex-1 flex-col border-x-4 border-b-4 border-[#3a68cc]">
        <MenuBar />
        <StandardBar />
        <FormatBar />
        <FormulaBar />
        <Sheet />
        <TabBar />
        <StatusBar />
      </div>
    </div>
  );
}
